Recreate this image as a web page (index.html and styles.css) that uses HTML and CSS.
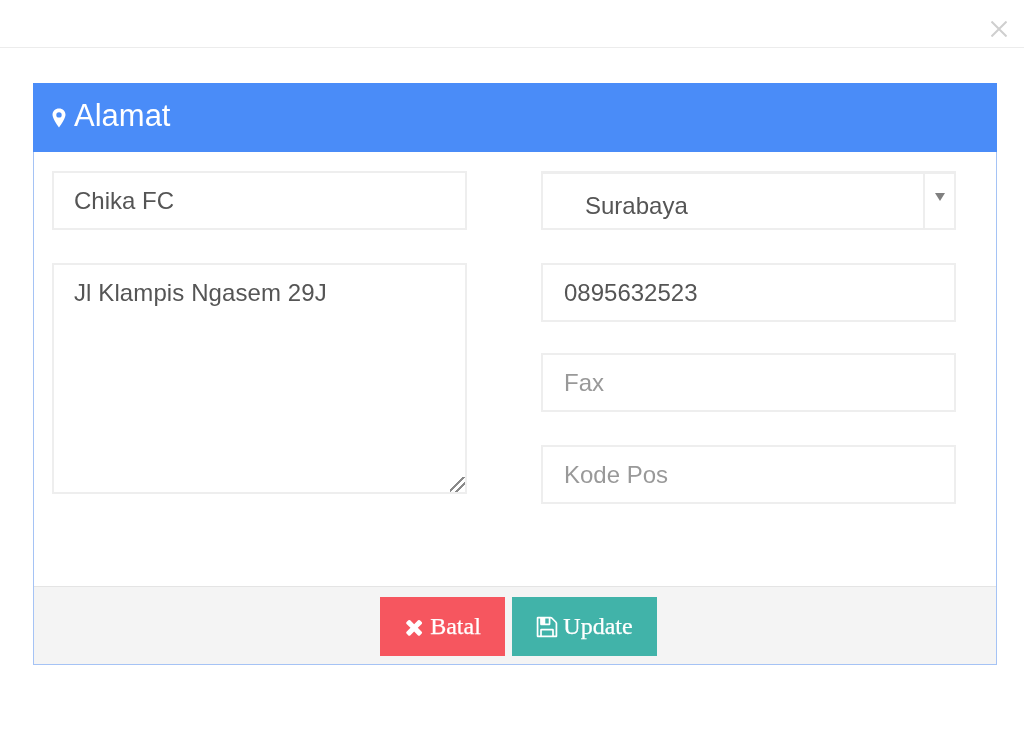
FILE: index.html
```html
<!DOCTYPE html>
<html lang="id">
<head>
<meta charset="utf-8">
<title>Alamat</title>
<link rel="stylesheet" href="styles.css">
</head>
<body>
<header class="modal-head">
  <button class="close" type="button" aria-label="Tutup">
    <svg viewBox="0 0 16 16" width="16" height="16"><path d="M0.5 0.500 15.500 15.500M15.500 0.500 0.500 15.500"/></svg>
  </button>
</header>
<section class="panel">
  <h2 class="panel-title">
    <svg class="pin" viewBox="0 0 14 20" width="14" height="20"><path fill-rule="evenodd" d="M7 0.500C3.200 0.500 .5 3.200 .5 6.800c0 3 3.900 9.300 6.500 12.700 2.600-3.400 6.500-9.700 6.500-12.700C13.500 3.200 10.800 .5 7 .5zm0 3.700a2.700 2.700 0 1 1 0 5.400 2.700 2.700 0 0 1 0-5.400z"/></svg>
    <span>Alamat</span>
  </h2>
  <form class="panel-body">
    <div class="col col-left">
      <input class="field" type="text" value="Chika FC" aria-label="Nama">
      <textarea class="field area" aria-label="Alamat">Jl Klampis Ngasem 29J</textarea>
    </div>
    <div class="col">
      <div class="select">
        <span class="select-value">Surabaya</span>
        <span class="select-arrow"><i class="caret"></i></span>
      </div>
      <input class="field phone" type="text" value="0895632523" aria-label="Telepon">
      <input class="field fax" type="text" placeholder="Fax" aria-label="Fax">
      <input class="field pos" type="text" placeholder="Kode Pos" aria-label="Kode Pos">
    </div>
  </form>
  <footer class="panel-foot">
    <button class="btn btn-red" type="button">
      <svg viewBox="0 0 1408 1792" width="20" height="24"><path transform="translate(-182 0)" d="M1490 1322q0 40-28 68l-136 136q-28 28-68 28t-68-28l-294-294-294 294q-28 28-68 28t-68-28l-136-136q-28-28-28-68t28-68l294-294-294-294q-28-28-28-68t28-68l136-136q28-28 68-28t68 28l294 294 294-294q28-28 68-28t68 28l136 136q28 28 28 68t-28 68l-294 294 294 294q28 28 28 68z"/></svg>
      <span>Batal</span>
    </button>
    <button class="btn btn-teal" type="button">
      <svg viewBox="0 0 1536 1792" width="22" height="24"><path transform="translate(-128 0)" d="M512 1536h768v-384h-768v384zm896 0h128v-896q0-14-10-38.500t-20-34.500l-281-281q-10-10-34-20t-39-10v416q0 40-28 68t-68 28h-576q-40 0-68-28t-28-68v-416h-128v1280h128v-416q0-40 28-68t68-28h832q40 0 68 28t28 68v416zm-384-928v-320q0-13-9.500-22.500t-22.500-9.500h-192q-13 0-22.500 9.500t-9.500 22.500v320q0 13 9.500 22.500t22.500 9.500h192q13 0 22.500-9.500t9.500-22.500zm640 32v928q0 40-28 68t-68 28h-1344q-40 0-68-28t-28-68v-1344q0-40 28-68t68-28h928q40 0 88 20t76 48l280 280q28 28 48 76t20 88z"/></svg>
      <span>Update</span>
    </button>
  </footer>
</section>
</body>
</html>
```
FILE: styles.css
```css
* { box-sizing: border-box; }
html, body { margin: 0; height: 742px; overflow: hidden; background: #fff; }
body { font-family: "Liberation Sans", Arial, sans-serif; color: #555; filter: blur(0.4px); }

.modal-head {
  height: 48px;
  border-bottom: 1px solid #ececec;
  display: flex;
  justify-content: flex-end;
  padding: 21px 17px 0 0;
}
.close { width: 16px; height: 16px; padding: 0; border: 0; background: none; display: block; }
.close svg { display: block; stroke: #cfcfcf; stroke-width: 2; fill: none; }

.panel {
  width: 964px;
  margin: 35px 0 0 33px;
  border: 1px solid #a5c3f5;
  border-top: 0;
}
.panel-title {
  height: 69px;
  margin: 0 -1px;
  padding: 0 0 4px 19px;
  background: #4a8cf8;
  color: #fff;
  font-size: 31px;
  font-weight: 400;
  display: flex;
  align-items: center;
  gap: 8px;
}
.pin { fill: #fff; margin-top: 4px; flex: none; }

.panel-body {
  height: 434px;
  padding: 19px 39px 0 18px;
  display: grid;
  grid-template-columns: 415px 415px;
  column-gap: 74px;
  align-items: start;
}
.col { display: flex; flex-direction: column; }

.field {
  display: block;
  width: 415px;
  height: 59px;
  padding: 0 21px;
  border: 2px solid #eeeeee;
  border-radius: 0;
  outline: 0;
  background: #fff;
  color: #555;
  font: 24px "Liberation Sans", Arial, sans-serif;
}
.col-left .field { padding-left: 20px; }
.field::placeholder { color: #999; opacity: 1; }
.area { height: 231px; margin-top: 33px; padding-top: 14px; letter-spacing: 0.1px; }
.area::-webkit-resizer {
  background: linear-gradient(135deg,
    transparent 42%, #8a8a8a 42%, #8a8a8a 52%,
    transparent 52%, transparent 66%, #8a8a8a 66%, #8a8a8a 76%, transparent 76%);
}
.phone { margin-top: 33px; }
.fax { margin-top: 31px; }
.pos { margin-top: 33px; }

.select {
  height: 59px;
  display: flex;
  border: 2px solid #eeeeee;
  border-top-width: 3px;
}
.select-value { flex: 1; padding: 16px 0 0 42px; font-size: 24px; line-height: 32px; color: #555; }
.select-arrow { width: 31px; border-left: 2px solid #eeeeee; display: flex; justify-content: center; padding-top: 19px; }
.caret { width: 0; height: 0; border: 5px solid transparent; border-top: 8px solid #808080; border-bottom: 0; }

.panel-foot {
  height: 78px;
  padding: 10px 0 0 7px;
  background: #f4f4f4;
  border-top: 1px solid #e4e4e4;
  display: flex;
  justify-content: center;
  gap: 7px;
}
.btn {
  height: 59px;
  padding: 0;
  border: 0;
  color: #fff;
  font: 24px "Liberation Serif", "Times New Roman", serif;
  -webkit-text-stroke: 0.25px #fff;
  display: flex;
  align-items: center;
  justify-content: center;
  gap: 6px;
}
.btn svg { fill: #fff; display: block; flex: none; }
.btn-red { width: 125px; background: #f6565f; }
.btn-teal { width: 145px; background: #41b3a9; gap: 5px; }
```
